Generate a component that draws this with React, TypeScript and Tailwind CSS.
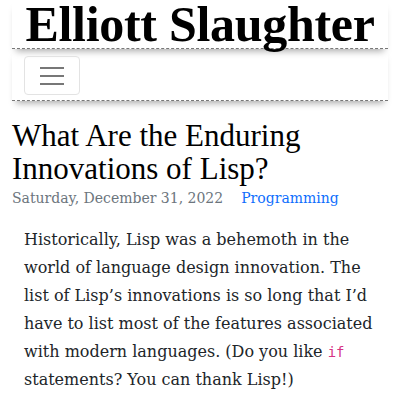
export default function App() {
  return (
    <div className="w-[400px] h-[400px] overflow-hidden bg-white text-[#212529] px-3" style={{ fontFamily: '"DejaVu Serif", serif' }}>
      {/* Site title */}
      <header>
        <h1 className="text-center font-bold text-[50px] leading-[48px] h-[49px] whitespace-nowrap text-black border-b border-dashed border-[#777] shadow-[0_6px_7px_-4px_rgba(0,0,0,0.35)] tracking-[-0.3px]" style={{ fontFamily: '"Liberation Serif", serif' }}>
          Elliott Slaughter
        </h1>
        <nav className="border-b border-dashed border-[#777] shadow-[0_6px_7px_-4px_rgba(0,0,0,0.35)] pt-[7px] pb-[5px] px-3">
          <button className="w-[56px] h-[39px] border border-[#e3e3e3] rounded-[4px] flex items-center justify-center">
            <svg width="24" height="18" viewBox="0 0 24 18">
              <path d="M0 1h24M0 9h24M0 17h24" stroke="#777" strokeWidth="2" />
            </svg>
          </button>
        </nav>
      </header>

      {/* Post */}
      <article className="pt-[18px]">
        <h2 className="text-[31px] leading-[33px] text-black" style={{ fontFamily: '"Liberation Serif", serif' }}>
          What Are the Enduring Innovations of Lisp?
        </h2>
        <div className="flex gap-[18px] text-[14px] leading-[22px] mt-[2px]">
          <span className="text-[#6c757d]">Saturday, December 31, 2022</span>
          <a className="text-[#0d6efd]">Programming</a>
        </div>
        <p className="px-3 pt-[17px] text-[16px] leading-[28px] text-[#212529]">
          Historically, Lisp was a behemoth in the world of language design innovation. The list of Lisp’s innovations is so long that I’d have to list most of the features associated with modern languages. (Do you like{" "}
          <code className="text-[#d63384] text-[14px]" style={{ fontFamily: '"DejaVu Sans Mono", monospace' }}>if</code>{" "}
          statements? You can thank Lisp!)
        </p>
      </article>
    </div>
  );
}
